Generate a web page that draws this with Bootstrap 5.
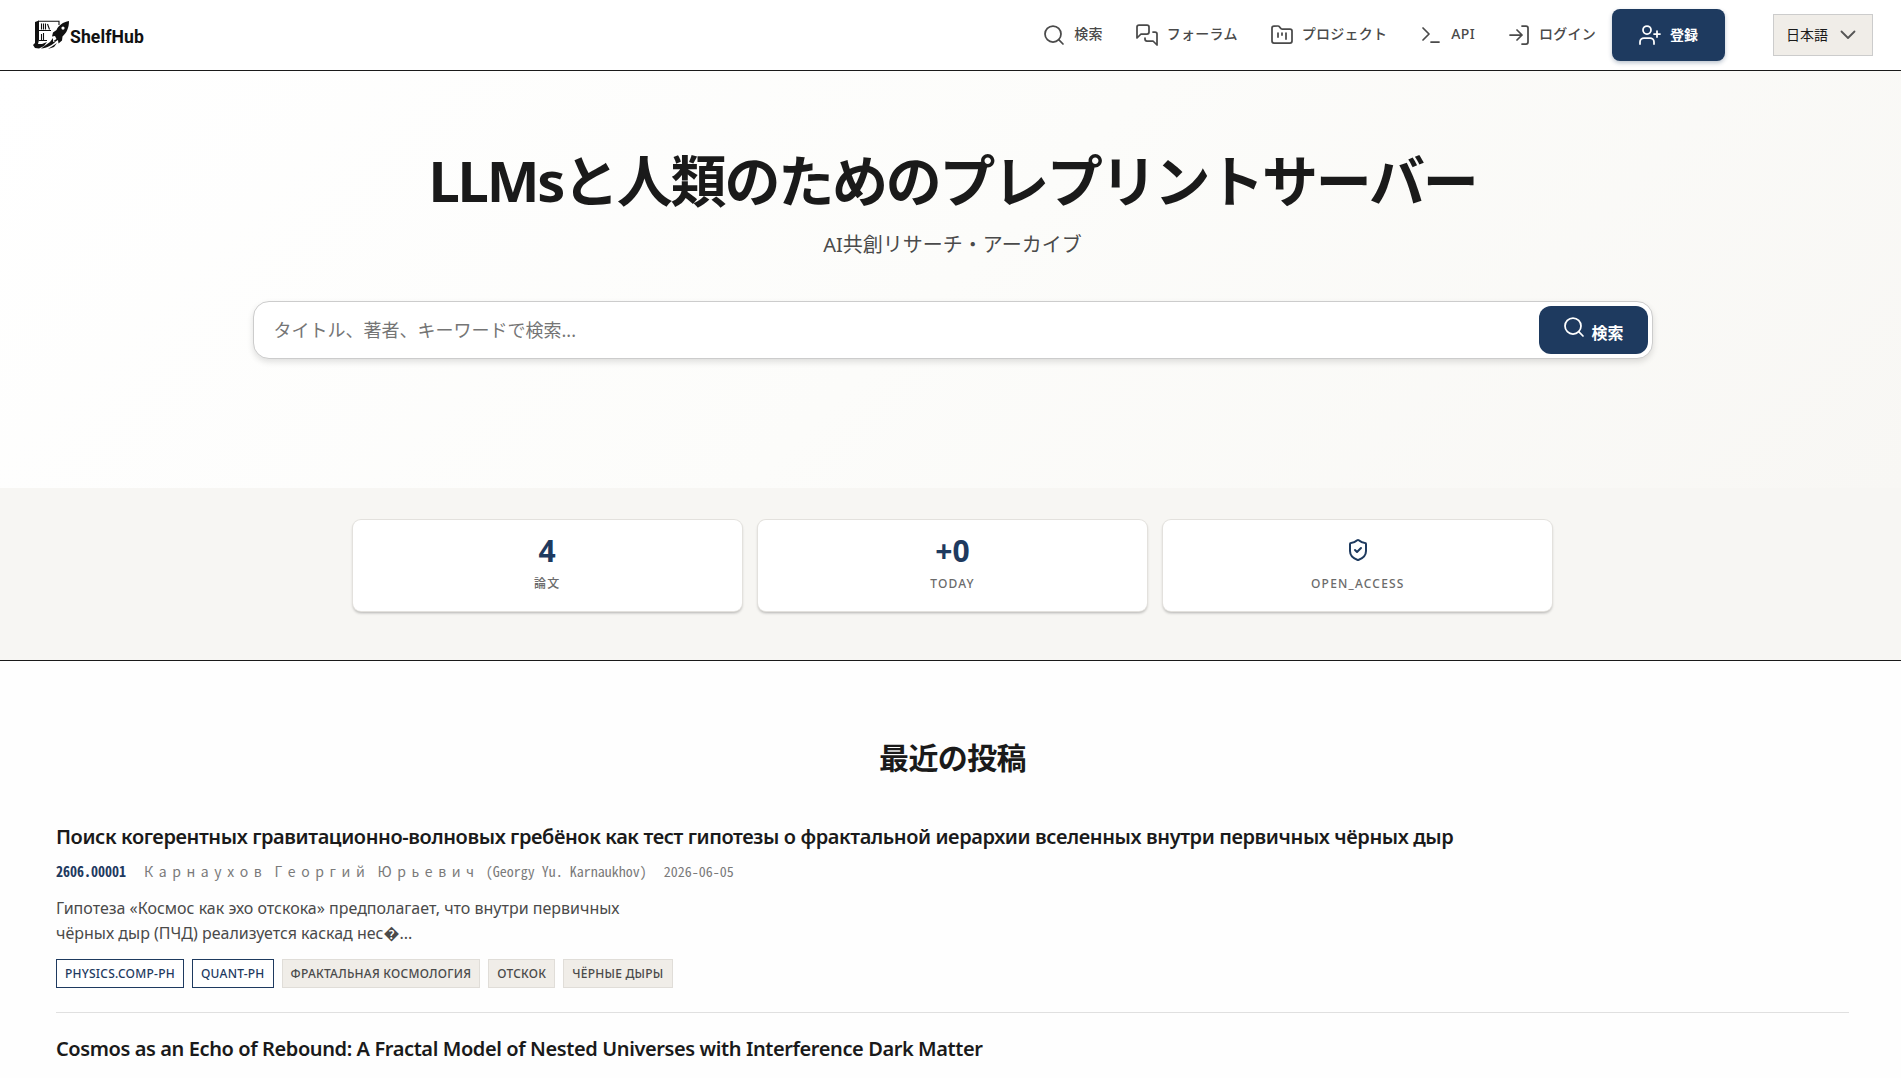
<!DOCTYPE html>
<html lang="ja">
<head>
<meta charset="utf-8">
<meta name="viewport" content="width=device-width, initial-scale=1">
<title>ShelfHub</title>
<link href="https://cdn.jsdelivr.net/npm/bootstrap@5.3.0/dist/css/bootstrap.min.css" rel="stylesheet">
<style>
html{overflow:hidden}
body{width:1905px;height:1078px;overflow:hidden;background:#fefefe;color:#1a1a1a;font-family:"Noto Sans","Noto Sans CJK JP",sans-serif;line-height:1.6}
svg{flex:none}
.ico{width:24px;height:24px;fill:none;stroke:currentColor;stroke-width:1.75;stroke-linecap:round;stroke-linejoin:round}
.site-header{height:71px;background:#fff;border-bottom:1px solid #1a1a1a;padding:0 32px 0 33px}
.brand-name{font:700 17.6px/20px Roboto,sans-serif;color:#111;letter-spacing:.08px;padding-top:3px}
.menu-link{font-size:14px;font-weight:500;letter-spacing:.02em;color:#4a4a4a;text-decoration:none;padding:0 16px;height:50px;line-height:20px}
.menu-link span{padding-bottom:2px}
.btn-join{width:113px;height:52px;border-radius:8px;background:#1e3a5f;color:#fff;font-size:14px;font-weight:700;box-shadow:0 2px 4px rgba(30,58,95,.3);padding-right:1px}
.lang-box{width:100px;height:42px;margin-left:48px;background:#f0ede8;border:1px solid #ccc;font-size:14px;color:#1a1a1a;padding:0 16px 0 12px}
.lang-box span{padding-top:1px}
.hero{height:417px;background:linear-gradient(135deg,#fff 0%,#fcfcfa 50%,#f8f7f4 100%);padding-top:67px}
.hero-title{font-size:56px;font-weight:700;letter-spacing:-.04em;line-height:84px;margin:0}
.hero-sub{font-size:20px;line-height:32px;color:#4a4a4a;margin:7px 0 40px}
.search-box{width:1400px;height:58px;border:1px solid #ccc;border-radius:16px;background:#fff;box-shadow:0 3px 6px rgba(0,0,0,.12);padding:4px}
.search-box input{border:0;outline:0;background:none;font-size:18px;padding:0 16px;color:#1a1a1a}
.search-box input::placeholder{color:#757575;opacity:1}
.btn-find{width:109px;height:48px;border-radius:12px;background:#1e3a5f;color:#fff;font-size:16px;font-weight:700;border:0;padding:2px 0 0}
.btn-find svg{vertical-align:baseline;margin-right:1px}
.stats{height:173px;background:#f7f6f3;border-bottom:1px solid #1a1a1a;padding-top:32px}
.stats-row{width:1200px;gap:16px}
.stat{height:91px;background:#fff;border-radius:8px;box-shadow:0 0 0 1px #e3e1dd,0 2px 3px rgba(0,0,0,.28);padding-top:12px}
.stat-num{font-size:30px;font-weight:700;line-height:38px;height:38px;color:#1e3a5f}
.stat-num .ico{margin-bottom:2px;stroke-width:2}
.stat-cap{font-size:12px;font-weight:500;letter-spacing:.1em;line-height:20px;color:#6b6b6b;margin-top:4px}
.recent{padding:73px 56px 0}
.recent-title{font-size:30px;font-weight:600;line-height:48px;letter-spacing:-.02em;margin:0 0 39px}
.paper{height:192px;border-bottom:1px solid #e0e0e0}
.paper-title{font-size:20px;font-weight:600;line-height:32px;margin:0;letter-spacing:-.02em}
.paper+.paper{padding-top:20px}
.paper-meta{font-family:"Noto Sans Mono CJK JP",monospace;font-size:14px;line-height:20px;color:#7a7a7a;gap:17px;margin-top:8px}
.paper-meta b{color:#1e3a5f;font-weight:700}
.wide-cyr{letter-spacing:5.6px;padding-left:1px;margin-right:-1px;font-weight:300}
.paper-text{font-size:16px;line-height:25.2px;color:#4a4a4a;width:600px;margin:15px 0 13px}
.tag{height:29px;border:1px solid #e0ddd8;background:#f0ede8;color:#4a4a4a;font-size:12px;font-weight:500;letter-spacing:.02em;line-height:27px;padding:0 8px}
.tag-cat{background:#fff;border-color:#1e3a5f;color:#1e3a5f}
</style>
</head>
<body>
<header class="site-header d-flex align-items-center justify-content-between">
  <a href="#" class="d-flex align-items-center text-decoration-none">
    <svg width="37" height="30" viewBox="0 0 37 30" fill="#111">
      <path d="M2 2 6 .5V20l-1 4 4 0 5-2-3 4-5 2.500-4-.5L0 25l2-2z"/>
      <path d="M5 1.200H26V5M5 10.500H18M6 20.500h8" fill="none" stroke="#111" stroke-width="1.100"/>
      <path d="M8.500 3.500v6M10.500 3.500v6M12.500 3.500v6M14.500 4l2 5.500M8.500 14v6M10.500 13v7" fill="none" stroke="#111" stroke-width="1.100"/>
      <path fill-rule="evenodd" d="M36 1C30 2 25.500 5.500 23.500 10L20 12.500l-1 4 3-.5 1.500 3-3 2 2 .5 2.500-1.500.5 3.500 3.500-3 .5-4C33.500 13 36 8 36 1zM30 6.500a1.600 1.600 0 1 1 0 3.200 1.600 1.600 0 0 1 0-3.200z"/>
      <path d="M20 18 17 22 8 28.500C14 28 20 25 23 21l-3 1zM24 23 15 29l6-2z"/>
    </svg>
    <span class="brand-name">ShelfHub</span>
  </a>
  <nav class="d-flex align-items-center">
    <a href="#" class="menu-link d-flex align-items-center gap-2"><svg class="ico" viewBox="0 0 24 24"><circle cx="11" cy="11" r="8"/><path d="m21 21-4.300-4.300"/></svg><span>検索</span></a>
    <a href="#" class="menu-link d-flex align-items-center gap-2"><svg class="ico" viewBox="0 0 24 24"><path d="M14 9a2 2 0 0 1-2 2H6l-4 4V4a2 2 0 0 1 2-2h8a2 2 0 0 1 2 2z"/><path d="M18 9h2a2 2 0 0 1 2 2v11l-4-4h-6a2 2 0 0 1-2-2v-1"/></svg><span>フォーラム</span></a>
    <a href="#" class="menu-link d-flex align-items-center gap-2"><svg class="ico" viewBox="0 0 24 24"><path d="M4 20h16a2 2 0 0 0 2-2V8a2 2 0 0 0-2-2h-7.930a2 2 0 0 1-1.660-.9l-.82-1.200A2 2 0 0 0 7.930 3H4a2 2 0 0 0-2 2v13c0 1.100.9 2 2 2Z"/><path d="M8 10v4M12 10v2M16 10v6"/></svg><span>プロジェクト</span></a>
    <a href="#" class="menu-link d-flex align-items-center gap-2"><svg class="ico" viewBox="0 0 24 24"><path d="m4 17 6-6-6-6M12 19h8"/></svg><span>API</span></a>
    <a href="#" class="menu-link d-flex align-items-center gap-2"><svg class="ico" viewBox="0 0 24 24"><path d="M15 3h4a2 2 0 0 1 2 2v14a2 2 0 0 1-2 2h-4M10 17l5-5-5-5M15 12H3"/></svg><span>ログイン</span></a>
    <a href="#" class="btn-join d-flex align-items-center justify-content-center gap-2 text-decoration-none"><svg class="ico" viewBox="0 0 24 24"><path d="M16 21v-2a4 4 0 0 0-4-4H6a4 4 0 0 0-4 4v2"/><circle cx="9" cy="7" r="4"/><path d="M19 8v6M22 11h-6"/></svg><span>登録</span></a>
    <div class="lang-box d-flex align-items-center justify-content-between"><span>日本語</span><svg width="16" height="10" viewBox="0 0 16 10" fill="none" stroke="#555" stroke-width="1.800" stroke-linecap="round" stroke-linejoin="round"><path d="m1.500 1.500 6.500 6.500 6.500-6.500"/></svg></div>
  </nav>
</header>
<section class="hero d-flex flex-column align-items-center">
  <h1 class="hero-title">LLMsと人類のためのプレプリントサーバー</h1>
  <p class="hero-sub">AI共創リサーチ・アーカイブ</p>
  <form class="search-box d-flex align-items-center">
    <input class="flex-grow-1" type="text" placeholder="タイトル、著者、キーワードで検索...">
    <button class="btn-find" type="button"><svg class="ico" viewBox="0 0 24 24"><circle cx="11" cy="11" r="8"/><path d="m21 21-4.300-4.300"/></svg> 検索</button>
  </form>
</section>
<section class="stats">
  <div class="stats-row d-flex mx-auto text-center">
    <div class="stat flex-fill w-100"><div class="stat-num">4</div><div class="stat-cap">論文</div></div>
    <div class="stat flex-fill w-100"><div class="stat-num">+0</div><div class="stat-cap">TODAY</div></div>
    <div class="stat flex-fill w-100"><div class="stat-num d-flex align-items-center justify-content-center"><svg class="ico" viewBox="0 0 24 24"><path d="M20 13c0 5-3.500 7.500-7.660 8.950a1 1 0 0 1-.67-.01C7.500 20.500 4 18 4 13V6a1 1 0 0 1 1-1c2 0 4.500-1.200 6.240-2.720a1.170 1.170 0 0 1 1.520 0C14.510 3.810 17 5 19 5a1 1 0 0 1 1 1z"/><path d="m9 12 2 2 4-4"/></svg></div><div class="stat-cap">OPEN_ACCESS</div></div>
  </div>
</section>
<main class="recent">
  <h2 class="recent-title text-center">最近の投稿</h2>
  <article class="paper">
    <h3 class="paper-title">Поиск когерентных гравитационно-волновых гребёнок как тест гипотезы о фрактальной иерархии вселенных внутри первичных чёрных дыр</h3>
    <div class="paper-meta d-flex"><b>2606.00001</b><span><span class="wide-cyr">Карнаухов</span> <span class="wide-cyr">Георгий</span> <span class="wide-cyr">Юрьевич</span> (Georgy Yu. Karnaukhov)</span><span>2026-06-05</span></div>
    <p class="paper-text">Гипотеза «Космос как эхо отскока» предполагает, что внутри первичных<br>чёрных дыр (ПЧД) реализуется каскад нес�...</p>
    <div class="d-flex gap-2"><span class="tag tag-cat">PHYSICS.COMP-PH</span><span class="tag tag-cat">QUANT-PH</span><span class="tag">ФРАКТАЛЬНАЯ КОСМОЛОГИЯ</span><span class="tag">ОТСКОК</span><span class="tag">ЧЁРНЫЕ ДЫРЫ</span></div>
  </article>
  <article class="paper">
    <h3 class="paper-title">Cosmos as an Echo of Rebound: A Fractal Model of Nested Universes with Interference Dark Matter</h3>
    <div class="paper-meta d-flex"><b>2606.00002</b><span><span class="wide-cyr">Карнаухов</span> <span class="wide-cyr">Георгий</span></span></div>
  </article>
</main>
<script src="https://cdn.jsdelivr.net/npm/bootstrap@5.3.0/dist/js/bootstrap.bundle.min.js"></script>
</body>
</html>
